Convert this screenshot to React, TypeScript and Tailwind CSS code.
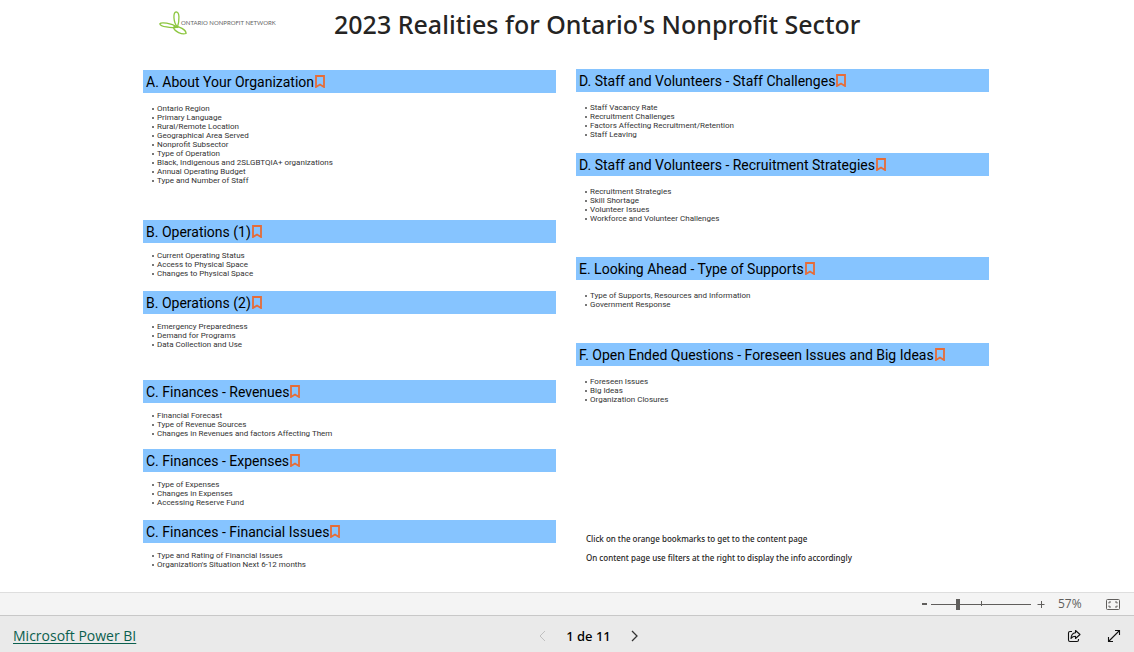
import * as React from 'react';

type Section = {
  title: string;
  items: string[];
  height: string;
  loose?: boolean;
};

const leftSections: Section[] = [
  {
    title: 'A. About Your Organization',
    items: [
      'Ontario Region',
      'Primary Language',
      'Rural/Remote Location',
      'Geographical Area Served',
      'Nonprofit Subsector',
      'Type of Operation',
      'Black, Indigenous and 2SLGBTQIA+ organizations',
      'Annual Operating Budget',
      'Type and Number of Staff',
    ],
    height: 'min-h-[150px]',
    loose: true,
  },
  {
    title: 'B. Operations (1)',
    items: ['Current Operating Status', 'Access to Physical Space', 'Changes to Physical Space'],
    height: 'min-h-[71px]',
  },
  {
    title: 'B. Operations (2)',
    items: ['Emergency Preparedness', 'Demand for Programs', 'Data Collection and Use'],
    height: 'min-h-[89px]',
  },
  {
    title: 'C. Finances - Revenues',
    items: ['Financial Forecast', 'Type of Revenue Sources', 'Changes in Revenues and factors Affecting Them'],
    height: 'min-h-[69px]',
  },
  {
    title: 'C. Finances - Expenses',
    items: ['Type of Expenses', 'Changes in Expenses', 'Accessing Reserve Fund'],
    height: 'min-h-[71px]',
  },
  {
    title: 'C. Finances - Financial Issues',
    items: ['Type and Rating of Financial Issues', "Organization's Situation Next 6-12 months"],
    height: 'min-h-[51px]',
  },
];

const rightSections: Section[] = [
  {
    title: 'D. Staff and Volunteers - Staff Challenges',
    items: ['Staff Vacancy Rate', 'Recruitment Challenges', 'Factors Affecting Recruitment/Retention', 'Staff Leaving'],
    height: 'min-h-[84px]',
    loose: true,
  },
  {
    title: 'D. Staff and Volunteers - Recruitment Strategies',
    items: ['Recruitment Strategies', 'Skill Shortage', 'Volunteer Issues', 'Workforce and Volunteer Challenges'],
    height: 'min-h-[104px]',
    loose: true,
  },
  {
    title: 'E. Looking Ahead - Type of Supports',
    items: ['Type of Supports, Resources and Information', 'Government Response'],
    height: 'min-h-[86px]',
    loose: true,
  },
  {
    title: 'F. Open Ended Questions - Foreseen Issues and Big Ideas',
    items: ['Foreseen Issues', 'Big Ideas', 'Organization Closures'],
    height: 'min-h-[191px]',
    loose: true,
  },
];

function Logo() {
  return (
    <div className="flex items-center w-[175px] shrink-0">
      <svg viewBox="0 0 28 24" className="w-7 h-6 shrink-0" fill="none" stroke="#8cc63f" strokeWidth="1.3">
        <path d="M18.500 16C14 11 14 1.200 17.200 0.800C20.800 1 20.500 9 18.500 16Z" />
        <path d="M18.500 16C12 17.500 1.500 15.500 0.800 12.800C2 10.800 12 12 18.500 16Z" />
        <path d="M14.500 15.500C20 14.500 27.500 19 27 22.500C23 24 15.500 20.500 14.500 16.500" />
      </svg>
      <span className="-ml-1.5 text-[6px] leading-none text-[#666] whitespace-nowrap font-['Lato',sans-serif]">
        ONTARIO NONPROFIT NETWORK
      </span>
    </div>
  );
}

function SectionBlock({ section }: { section: Section }) {
  return (
    <section className={section.height}>
      <div className="h-[23px] bg-[#86c4ff] flex items-center pl-[3px] gap-px">
        <h2 className="text-[14px] leading-5 text-black whitespace-nowrap">{section.title}</h2>
        <button type="button" aria-label={`Open ${section.title}`} className="cursor-pointer">
          <svg viewBox="0 0 10 13" className="w-2.5 h-[13px]" fill="none" stroke="#e66c37" strokeWidth="1.8">
            <path d="M1 1H9V12L5 9.500L1 12Z" />
          </svg>
        </button>
      </div>
      <ul className={`pl-[9px] text-[8px] leading-[9px] text-[#333] ${section.loose ? 'pt-[11px]' : 'pt-2'}`}>
        {section.items.map((item) => (
          <li key={item} className="flex items-center gap-[3px]">
            <span className="w-0.5 h-0.5 bg-[#777]" />
            {item}
          </li>
        ))}
      </ul>
    </section>
  );
}

export default function App() {
  const [zoom, setZoom] = React.useState(26);
  const [page, setPage] = React.useState(1);

  return (
    <div className="min-h-screen flex flex-col bg-white font-['Roboto',sans-serif]">
      <main className="flex-1 w-full max-w-[848px] mx-auto pr-0.5">
        <header className="h-[69px] pl-4 pt-1.5 flex items-start">
          <div className="pt-[5px]">
            <Logo />
          </div>
          <h1 className="text-[25px] leading-9 font-medium text-[#252423] whitespace-nowrap font-['Noto_Sans',sans-serif]">
            2023 Realities for Ontario's Nonprofit Sector
          </h1>
        </header>

        <div className="grid grid-cols-2 gap-5">
          <div className="pt-px">
            {leftSections.map((s) => (
              <SectionBlock key={s.title} section={s} />
            ))}
          </div>
          <div>
            {rightSections.map((s) => (
              <SectionBlock key={s.title} section={s} />
            ))}
            <div className="pl-2.5 flex flex-col gap-[9px] text-[8px] leading-[10px] font-medium text-[#252423] font-['Noto_Sans',sans-serif]">
              <p>Click on the orange bookmarks to get to the content page</p>
              <p>On content page use filters at the right to display the info accordingly</p>
            </div>
          </div>
        </div>
      </main>

      {/* Zoom bar */}
      <div className="h-[23px] bg-[#f4f4f4] border-t border-[#dedede] flex items-center justify-end pr-3.5 text-[#605e5c] font-['Open_Sans',sans-serif]">
        <button type="button" aria-label="Zoom out" onClick={() => setZoom(Math.max(0, zoom - 5))} className="w-2.5 h-4 flex items-center justify-center">
          <span className="w-[5px] h-0.5 bg-[#605e5c]" />
        </button>
        <div className="relative ml-0.5 w-[100px] h-4">
          <span className="absolute left-1/2 top-[5px] w-px h-[5px] bg-[#605e5c]" />
          <input
            type="range"
            aria-label="Zoom"
            min={0}
            max={100}
            value={zoom}
            onChange={(e) => setZoom(Number(e.target.value))}
            className="absolute inset-0 w-full h-4 appearance-none bg-transparent [&::-webkit-slider-runnable-track]:h-px [&::-webkit-slider-runnable-track]:bg-[#605e5c] [&::-webkit-slider-thumb]:appearance-none [&::-webkit-slider-thumb]:w-1 [&::-webkit-slider-thumb]:h-[11px] [&::-webkit-slider-thumb]:-mt-[5px] [&::-webkit-slider-thumb]:bg-[#605e5c]"
          />
        </div>
        <button type="button" aria-label="Zoom in" onClick={() => setZoom(Math.min(100, zoom + 5))} className="ml-1.5 w-2 h-4 flex items-center">
          <svg viewBox="0 0 8 8" className="w-2 h-2" stroke="#605e5c" fill="none">
            <path d="M0.500 4.500H7.500M4.500 1V8" />
          </svg>
        </button>
        <span className="ml-[13px] w-12 text-[12px] leading-4">57%</span>
        <button type="button" aria-label="Fit to page">
          <svg viewBox="0 0 14 11" className="w-3.5 h-[11px]" fill="none" stroke="#605e5c">
            <rect x="0.5" y="0.5" width="13" height="10" rx="1" />
            <path d="M5 3H3V4.500M9 3H11V4.500M5 8H3V6.500M9 8H11V6.500" />
          </svg>
        </button>
      </div>

      {/* Footer */}
      <footer className="h-[37px] bg-[#eaeaea] border-t border-[#c8c8c8] px-[13px] pt-1 grid grid-cols-3 items-center font-['Open_Sans',sans-serif]">
        <a href="#powerbi" className="justify-self-start text-[14px] leading-5 text-[#0b5f4e] underline underline-offset-2">
          Microsoft Power BI
        </a>
        <div className="justify-self-center ml-[43px] flex items-center">
          <button type="button" aria-label="Previous page" disabled={page === 1} onClick={() => setPage(page - 1)} className="text-black disabled:text-[#c0c0c0]">
            <svg viewBox="0 0 7 12" className="w-[7px] h-3" fill="none" stroke="currentColor">
              <path d="M6 1L1 6L6 11" />
            </svg>
          </button>
          <span className="mx-5 text-[13px] leading-5 font-medium text-black font-['Noto_Sans',sans-serif]">{page} de 11</span>
          <button type="button" aria-label="Next page" disabled={page === 11} onClick={() => setPage(page + 1)} className="text-[#333]">
            <svg viewBox="0 0 7 12" className="w-[7px] h-3" fill="none" stroke="currentColor" strokeWidth="1.3">
              <path d="M1 1L6 6L1 11" />
            </svg>
          </button>
        </div>
        <div className="justify-self-end flex items-center gap-[26px]">
          <button type="button" aria-label="Share">
            <svg viewBox="0 0 14 14" className="w-3.5 h-3.5" fill="none" stroke="#111" strokeWidth="1.1" strokeLinejoin="round">
              <path d="M5 2.500H3Q1.500 2.500 1.500 4V11Q1.500 12.500 3 12.500H10Q11.500 12.500 11.500 11V10" />
              <path d="M8.500 1.500L13 5.500L8.500 9.500V7.300Q5.500 7.300 4 9.500Q4.300 4 8.500 3.700Z" />
            </svg>
          </button>
          <button type="button" aria-label="Full screen">
            <svg viewBox="0 0 14 14" className="w-3.5 h-3.5" fill="none" stroke="#111" strokeWidth="1.1">
              <path d="M1.500 12.500L12.500 1.500M8 1.500H12.500V6M1.500 8V12.500H6" />
            </svg>
          </button>
        </div>
      </footer>
    </div>
  );
}
